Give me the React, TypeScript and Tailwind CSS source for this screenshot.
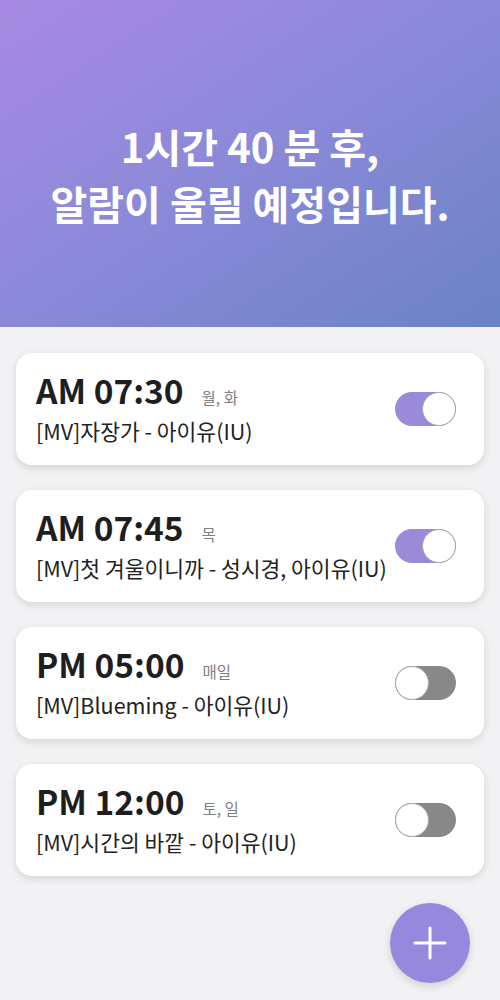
import React, { useState } from 'react';

type Alarm = {
  id: number;
  time: string;
  days: string;
  song: string;
  on: boolean;
};

const initialAlarms: Alarm[] = [
  { id: 1, time: 'AM 07:30', days: '월, 화', song: '[MV]자장가 - 아이유(IU)', on: true },
  { id: 2, time: 'AM 07:45', days: '목', song: '[MV]첫 겨울이니까 - 성시경, 아이유(IU)', on: true },
  { id: 3, time: 'PM 05:00', days: '매일', song: '[MV]Blueming - 아이유(IU)', on: false },
  { id: 4, time: 'PM 12:00', days: '토, 일', song: '[MV]시간의 바깥 - 아이유(IU)', on: false },
];

function Toggle({ on, onClick }: { on: boolean; onClick: () => void }) {
  return (
    <button
      onClick={onClick}
      className={`flex h-[34px] w-[61px] shrink-0 items-center rounded-full ${
        on ? 'justify-end bg-[#9b8ad9]' : 'justify-start bg-[#888888]'
      }`}
    >
      <span className="h-[34px] w-[34px] rounded-full border border-[#a8a8a8] bg-white" />
    </button>
  );
}

export default function App() {
  const [alarms, setAlarms] = useState(initialAlarms);

  const toggle = (id: number) =>
    setAlarms((list) => list.map((a) => (a.id === id ? { ...a, on: !a.on } : a)));

  return (
    <div
      className="relative min-h-[1000px] w-full bg-[#f2f2f4]"
      style={{ fontFamily: '"Noto Sans CJK KR", "Noto Sans", sans-serif' }}
    >
      <div className="flex h-[327px] flex-col items-center justify-center bg-gradient-to-br from-[#a88ae2] via-[#8a89d8] to-[#6a83c5] pt-[22px]">
        <p className="text-center text-[40px] font-bold leading-[57px] text-white">
          1시간 40 분 후,
          <br />
          알람이 울릴 예정입니다.
        </p>
      </div>

      <ul className="flex flex-col gap-[25px] px-[16px] pt-[26px]">
        {alarms.map((alarm) => (
          <li
            key={alarm.id}
            className="flex h-[112px] items-center justify-between rounded-[16px] bg-white pl-[20px] pr-[28px] shadow-[0_3px_8px_rgba(0,0,0,0.12)]"
          >
            <div className="flex flex-col self-start pt-[17px]">
              <div className="flex items-baseline">
                <span className="text-[33.5px] font-semibold leading-[40px] text-[#1e1e1e]">{alarm.time}</span>
                <span className="ml-[18px] text-[15.5px] text-[#808080]">{alarm.days}</span>
              </div>
              <span className="mt-[6px] whitespace-nowrap text-[21.5px] leading-[30px] text-[#222222]">
                {alarm.song}
              </span>
            </div>
            <Toggle on={alarm.on} onClick={() => toggle(alarm.id)} />
          </li>
        ))}
      </ul>

      <button className="absolute left-[390px] top-[903px] flex h-[80px] w-[80px] items-center justify-center rounded-full bg-[#9688dc] shadow-[0_3px_8px_rgba(0,0,0,0.15)]">
        <svg width="34" height="34" viewBox="0 0 34 34" fill="none" stroke="white" strokeWidth="3" strokeLinecap="round">
          <path d="M17 2v30M2 17h30" />
        </svg>
      </button>
    </div>
  );
}
